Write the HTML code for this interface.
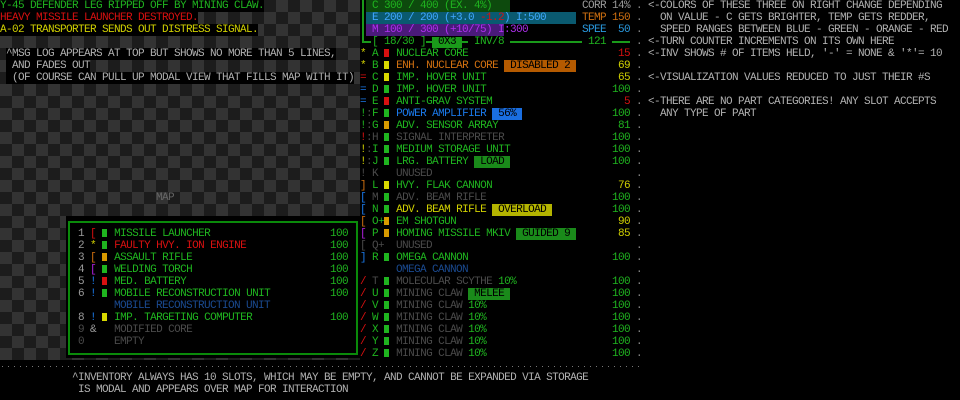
<!DOCTYPE html>
<html><head><meta charset="utf-8"><style>
*{margin:0;padding:0;box-sizing:border-box}
body{width:960px;height:400px;background:#000;position:relative;overflow:hidden;font:11px/12px "Liberation Mono","DejaVu Sans Mono",monospace;letter-spacing:-0.6px;text-transform:uppercase}
.map{position:absolute;left:0;top:0;width:360px;height:360px;background:conic-gradient(#333 0 25%,#1c1c1c 0 50%,#333 0 75%,#1c1c1c 0);background-size:24px 24px}
.r{position:absolute;height:12px;line-height:12px;white-space:pre}
.bk{background:#000}
.g{color:#1fb41f}.rd{color:#d81010}.y{color:#d0d000}.o{color:#d07010}.b{color:#1a78e8}.p{color:#b020e0}.gr{color:#9a9a9a}.dg{color:#4a4a4a}.db{color:#1a4a90}.n{color:#b0b0b0}
.sq{display:inline-block;width:5px;height:8px;margin-right:1px;vertical-align:-1px}
.sg{background:#1fb41f}.sr{background:#d81010}.sy{background:#d8d800}.so{background:#d89a00}
.v{position:absolute;left:606px;width:24px;text-align:right}
.d{position:absolute;left:636px;color:#888}
.tag{color:#000}
</style></head><body>
<div class="map"></div>
<div class="r bk g" style="top:0;left:0">Y-45 Defender leg ripped off by Mining Claw.</div>
<div class="r bk rd" style="top:12px;left:0">Heavy Missile Launcher Destroyed.</div>
<div class="r bk y" style="top:24px;left:0">A-02 Transporter sends out distress signal.</div>
<div class="r bk n" style="top:48px;left:6px">^msg log appears at top but shows no more than 5 lines,</div>
<div class="r bk n" style="top:60px;left:6px"> and fades out</div>
<div class="r bk n" style="top:72px;left:6px"> (of course can pull up modal view that fills map with it)</div>
<div class="r" style="top:192px;left:156px;color:#666">map</div>

<div style="position:absolute;left:66px;top:216px;width:294px;height:142px;background:#000"></div>
<div style="position:absolute;left:68px;top:221px;width:290px;height:134px;border:2px solid #0a8a0a"></div>
<div class="r" style="top:228px;left:78px"><span class="gr">1</span> <span class="rd">[</span> <span class="sq sg"></span> <span class="g">Missile Launcher</span></div><div class="r g" style="top:228px;left:330px">100</div>
<div class="r" style="top:240px;left:78px"><span class="gr">2</span> <span class="y">*</span> <span class="sq sg"></span> <span class="rd">Faulty Hvy. Ion Engine</span></div><div class="r g" style="top:240px;left:330px">100</div>
<div class="r" style="top:252px;left:78px"><span class="gr">3</span> <span class="o">[</span> <span class="sq so"></span> <span class="g">Assault Rifle</span></div><div class="r g" style="top:252px;left:330px">100</div>
<div class="r" style="top:264px;left:78px"><span class="gr">4</span> <span class="p">[</span> <span class="sq sg"></span> <span class="g">Welding Torch</span></div><div class="r g" style="top:264px;left:330px">100</div>
<div class="r" style="top:276px;left:78px"><span class="gr">5</span> <span class="b">!</span> <span class="sq sr"></span> <span class="g">Med. Battery</span></div><div class="r g" style="top:276px;left:330px">100</div>
<div class="r" style="top:288px;left:78px"><span class="gr">6</span> <span class="b">!</span> <span class="sq sg"></span> <span class="g">Mobile Reconstruction Unit</span></div><div class="r g" style="top:288px;left:330px">100</div>
<div class="r db" style="top:300px;left:114px">Mobile Reconstruction Unit</div>
<div class="r" style="top:312px;left:78px"><span class="gr">8</span> <span class="b">!</span> <span class="sq sy"></span> <span class="g">Imp. Targeting Computer</span></div><div class="r g" style="top:312px;left:330px">100</div>
<div class="r" style="top:324px;left:78px"><span class="dg">9</span> <span class="gr">&amp;</span>   <span class="dg">Modified Core</span></div>
<div class="r" style="top:336px;left:78px"><span class="dg">0</span>     <span class="dg">Empty</span></div>

<div style="position:absolute;left:362px;top:0;width:2px;height:43px;background:#1a9a1a"></div>
<div style="position:absolute;left:362px;top:41px;width:9px;height:2px;background:#1a9a1a"></div>
<div style="position:absolute;left:366px;top:0;width:144px;height:12px;background:#0d4a0d"></div>
<div style="position:absolute;left:366px;top:12px;width:210px;height:12px;background:#0a5a70"></div>
<div style="position:absolute;left:366px;top:24px;width:138px;height:12px;background:#4a1a7a"></div>
<div class="r g" style="top:0;left:372px">C 300 / 400 (ex. 4%)</div>
<div class="r" style="top:12px;left:372px;color:#40a8ff">E 200 / 200 (+3.0 <span class="rd">-1.2</span>) I:500</div>
<div class="r" style="top:24px;left:372px;color:#b030f0">M 100 / 300 (+10/75) I:300</div>
<div class="r gr" style="top:0;left:582px">CORR</div><div class="r gr v" style="top:0">14%</div>
<div class="r o" style="top:12px;left:582px">TEMP</div><div class="r o v" style="top:12px">150</div>
<div class="r" style="top:24px;left:582px;color:#2a9ae0">SPEE</div><div class="r v" style="top:24px;color:#2a9ae0">50</div>
<div class="r g" style="top:36px;left:372px">[ 18/30 ]</div>
<div style="position:absolute;left:426px;top:41px;width:6px;height:2px;background:#1a9a1a"></div>
<div style="position:absolute;left:432px;top:37px;width:30px;height:11px;background:#1a9a1a"></div>
<div class="r tag" style="top:36px;left:438px">0x3</div>
<div style="position:absolute;left:462px;top:41px;width:6px;height:2px;background:#1a9a1a"></div>
<div class="r g" style="top:36px;left:474px">INV/8</div>
<div style="position:absolute;left:510px;top:41px;width:72px;height:2px;background:#1a9a1a"></div>
<div class="r g" style="top:36px;left:588px">121</div>
<div style="position:absolute;left:612px;top:41px;width:18px;height:2px;background:#1a9a1a"></div>
<div class="d r" style="top:0">.</div><div class="d r" style="top:12px">.</div><div class="d r" style="top:24px">.</div><div class="d r" style="top:36px">.</div>

<div class="r" style="top:48px;left:360px"><span class="y">*</span> <span class="g">A</span> <span class="sq sr"></span> <span class="g">Nuclear Core</span></div><div class="r v rd" style="top:48px">15</div>
<div class="r" style="top:60px;left:360px"><span class="y">*</span> <span class="g">B</span> <span class="sq sy"></span> <span class="o">Enh. Nuclear Core</span> <span class="tag" style="background:#b45a00"> DISABLED 2 </span></div><div class="r v y" style="top:60px">69</div>
<div class="r" style="top:72px;left:360px"><span class="rd">=</span> <span class="g">C</span> <span class="sq sy"></span> <span class="g">Imp. Hover Unit</span></div><div class="r v y" style="top:72px">65</div>
<div class="r" style="top:84px;left:360px"><span class="b">=</span> <span class="g">D</span> <span class="sq sg"></span> <span class="g">Imp. Hover Unit</span></div><div class="r v g" style="top:84px">100</div>
<div class="r" style="top:96px;left:360px"><span class="b">=</span> <span class="g">E</span> <span class="sq sr"></span> <span class="g">Anti-Grav System</span></div><div class="r v rd" style="top:96px">5</div>
<div class="r" style="top:108px;left:360px"><span class="g">!</span><span class="dg">:</span><span class="g">F</span> <span class="sq sg"></span> <span class="b">Power Amplifier</span> <span class="tag" style="background:#1a6ee0"> 56% </span></div><div class="r v g" style="top:108px">100</div>
<div class="r" style="top:120px;left:360px"><span class="g">!</span><span class="dg">:</span><span class="g">G</span> <span class="sq so"></span> <span class="g">Adv. Sensor Array</span></div><div class="r v g" style="top:120px">81</div>
<div class="r" style="top:132px;left:360px"><span class="rd">!</span><span class="dg">:</span><span class="dg">H</span> <span class="sq sg"></span> <span class="dg">Signal Interpreter</span></div><div class="r v g" style="top:132px">100</div>
<div class="r" style="top:144px;left:360px"><span class="y">!</span><span class="dg">:</span><span class="g">I</span> <span class="sq sg"></span> <span class="g">Medium Storage Unit</span></div><div class="r v g" style="top:144px">100</div>
<div class="r" style="top:156px;left:360px"><span class="y">!</span><span class="dg">:</span><span class="g">J</span> <span class="sq sg"></span> <span class="g">Lrg. Battery</span> <span class="tag" style="background:#1a8a1a"> LOAD </span></div><div class="r v g" style="top:156px">100</div>
<div class="r" style="top:168px;left:360px"><span class="dg">! K   Unused</span></div>
<div class="r" style="top:180px;left:360px"><span class="o">]</span> <span class="g">L</span> <span class="sq sy"></span> <span class="g">Hvy. Flak Cannon</span></div><div class="r v y" style="top:180px">76</div>
<div class="r" style="top:192px;left:360px"><span class="b">[</span> <span class="dg">M</span> <span class="sq sg"></span> <span class="dg">Adv. Beam Rifle</span></div><div class="r v g" style="top:192px">100</div>
<div class="r" style="top:204px;left:360px"><span class="b">[</span> <span class="g">N</span> <span class="sq sg"></span> <span class="y">Adv. Beam Rifle</span> <span class="tag" style="background:#b4b400"> OVERLOAD </span></div><div class="r v g" style="top:204px">100</div>
<div class="r" style="top:216px;left:360px"><span class="o">[</span> <span class="g">O+</span><span class="sq so"></span> <span class="g">EM Shotgun</span></div><div class="r v y" style="top:216px">90</div>
<div class="r" style="top:228px;left:360px"><span class="p">[</span> <span class="g">P</span> <span class="sq so"></span> <span class="g">Homing Missile MkIV</span> <span class="tag" style="background:#1a8a1a"> GUIDED 9 </span></div><div class="r v y" style="top:228px">85</div>
<div class="r" style="top:240px;left:360px"><span class="dg">[ Q+  Unused</span></div>
<div class="r" style="top:252px;left:360px"><span class="b">]</span> <span class="g">R</span> <span class="sq sg"></span> <span class="g">Omega Cannon</span></div><div class="r v g" style="top:252px">100</div>
<div class="r db" style="top:264px;left:396px">Omega Cannon</div>
<div class="r" style="top:276px;left:360px"><span class="rd">/</span> <span class="dg">T</span> <span class="sq sg"></span> <span class="dg">Molecular Scythe</span> <span class="g">10%</span></div><div class="r v g" style="top:276px">100</div>
<div class="r" style="top:288px;left:360px"><span class="rd">/</span> <span class="g">U</span> <span class="sq sg"></span> <span class="dg">Mining Claw</span> <span class="tag" style="background:#1a8a1a"> MELEE </span></div><div class="r v g" style="top:288px">100</div>
<div class="r" style="top:300px;left:360px"><span class="rd">/</span> <span class="g">V</span> <span class="sq sg"></span> <span class="dg">Mining Claw</span> <span class="g">10%</span></div><div class="r v g" style="top:300px">100</div>
<div class="r" style="top:312px;left:360px"><span class="rd">/</span> <span class="g">W</span> <span class="sq sg"></span> <span class="dg">Mining Claw</span> <span class="g">10%</span></div><div class="r v g" style="top:312px">100</div>
<div class="r" style="top:324px;left:360px"><span class="rd">/</span> <span class="g">X</span> <span class="sq sg"></span> <span class="dg">Mining Claw</span> <span class="g">10%</span></div><div class="r v g" style="top:324px">100</div>
<div class="r" style="top:336px;left:360px"><span class="rd">/</span> <span class="g">Y</span> <span class="sq sg"></span> <span class="dg">Mining Claw</span> <span class="g">10%</span></div><div class="r v g" style="top:336px">100</div>
<div class="r" style="top:348px;left:360px"><span class="rd">/</span> <span class="g">Z</span> <span class="sq sg"></span> <span class="dg">Mining Claw</span> <span class="g">10%</span></div><div class="r v g" style="top:348px">100</div>
<div class="d r" style="top:48px">.</div><div class="d r" style="top:60px">.</div><div class="d r" style="top:72px">.</div><div class="d r" style="top:84px">.</div><div class="d r" style="top:96px">.</div><div class="d r" style="top:108px">.</div><div class="d r" style="top:120px">.</div><div class="d r" style="top:132px">.</div><div class="d r" style="top:144px">.</div><div class="d r" style="top:156px">.</div><div class="d r" style="top:168px">.</div><div class="d r" style="top:180px">.</div><div class="d r" style="top:192px">.</div><div class="d r" style="top:204px">.</div><div class="d r" style="top:216px">.</div><div class="d r" style="top:228px">.</div><div class="d r" style="top:240px">.</div><div class="d r" style="top:252px">.</div><div class="d r" style="top:264px">.</div><div class="d r" style="top:276px">.</div><div class="d r" style="top:288px">.</div><div class="d r" style="top:300px">.</div><div class="d r" style="top:312px">.</div><div class="d r" style="top:324px">.</div><div class="d r" style="top:336px">.</div><div class="d r" style="top:348px">.</div>

<div style="position:absolute;left:2px;top:366px;width:640px;height:1px;background:repeating-linear-gradient(90deg,#777 0 1px,transparent 1px 6px)"></div>
<div class="r n" style="top:372px;left:72px">^inventory always has 10 slots, which may be empty, and cannot be expanded via storage</div>
<div class="r n" style="top:384px;left:72px"> is modal and appears over map for interaction</div>

<div class="r n" style="top:0;left:648px">&lt;-colors of these three on right change depending</div>
<div class="r n" style="top:12px;left:648px">  on value - c gets brighter, temp gets redder,</div>
<div class="r n" style="top:24px;left:648px">  speed ranges between blue - green - orange - red</div>
<div class="r n" style="top:36px;left:648px">&lt;-turn counter increments on its own here</div>
<div class="r n" style="top:48px;left:648px">&lt;-inv shows # of items held, '-' = none &amp; '*'= 10</div>
<div class="r n" style="top:72px;left:648px">&lt;-visualization values reduced to just their #s</div>
<div class="r n" style="top:96px;left:648px">&lt;-there are no part categories! any slot accepts</div>
<div class="r n" style="top:108px;left:648px">  any type of part</div>
</body></html>
